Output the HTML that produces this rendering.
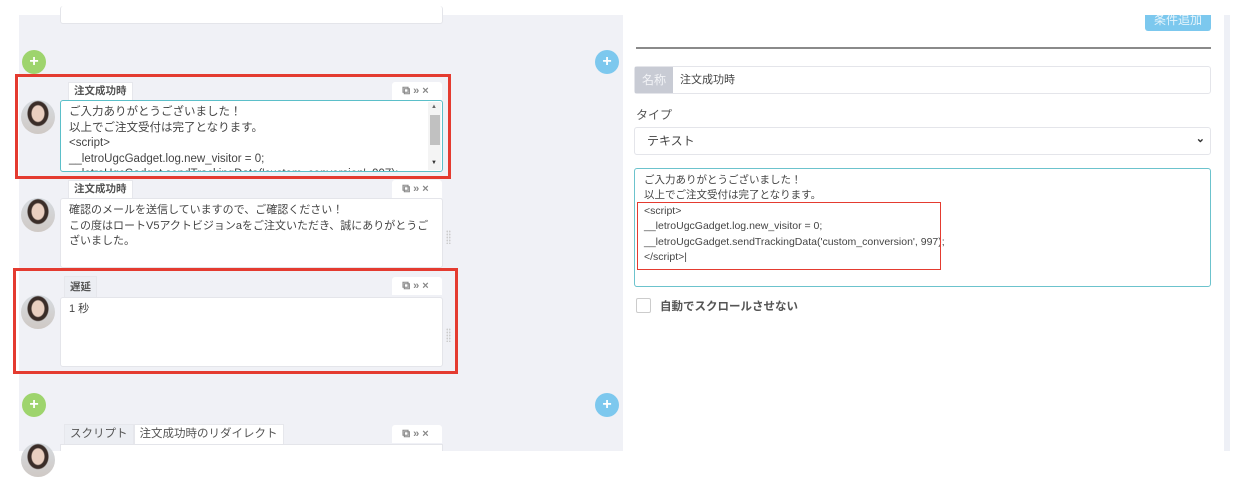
<!DOCTYPE html>
<html><head><meta charset="utf-8"><style>
*{box-sizing:border-box;margin:0;padding:0}
body{width:1234px;height:470px;background:#fff;position:relative;overflow:hidden;font-family:"Liberation Sans","Noto Sans CJK JP",sans-serif;color:#555;font-size:11px}
.a{position:absolute}
.lp{left:19px;top:15px;width:604px;height:436px;background:#f0f1f6}
.rs{left:1224px;top:15px;width:6px;height:436px;background:#eef0f6}
.plus{width:24px;height:24px;border-radius:50%;color:#fff;font-weight:bold;font-size:16px;line-height:24px;text-align:center}
.g{background:#9ed46d}.b{background:#7dc8ee}
.tab{background:#fff;border:1px solid #e6e7ec;border-bottom:none;height:18px;line-height:17px;padding:0 5px;font-size:10.5px;color:#555;font-weight:bold;white-space:nowrap}
.tabg{background:#eceef3}
.ic{background:#fff;height:18px;width:50px;border-radius:3px 3px 0 0;font-size:11px;color:#888;line-height:18px;text-align:center;letter-spacing:3px;font-weight:bold}
.box{background:#fff;border:1px solid #e4e5ea;border-radius:3px;padding:4px 8px;line-height:15.5px;font-size:11px;color:#444;white-space:nowrap}
.av{width:34px;height:34px;border-radius:50%;background:radial-gradient(ellipse 7px 9px at 50% 40%,#e9cfc0 0 6px,transparent 7px),radial-gradient(ellipse 11px 13px at 50% 40%,#3a2d28 0 10px,transparent 11px),linear-gradient(#d6dbe0,#cfc9c5);overflow:hidden}
.red{border:3px solid #e43b30}
.drag{width:5px;height:14px;background:radial-gradient(circle,#ccc 0.8px,transparent 1px) 0 0/2.5px 3px}
</style></head><body>
<div class="a lp"></div><div class="a rs"></div>
<div class="a box" style="left:60px;top:6px;width:383px;height:18px;border-top:none"></div>
<div class="a plus g" style="left:22px;top:50px">+</div>
<div class="a plus b" style="left:595px;top:50px">+</div>
<div class="a plus g" style="left:22px;top:393px">+</div>
<div class="a plus b" style="left:595px;top:393px">+</div>

<!-- card1 -->
<div class="a tab" style="left:68px;top:82px">注文成功時</div>
<div class="a ic" style="left:392px;top:82px">⧉»×</div>
<div class="a av" style="left:21px;top:100px"></div>
<div class="a box" style="left:60px;top:100px;width:383px;height:72px;border:1px solid #5bbfc9;overflow:hidden;padding-right:20px;font-size:11.5px">ご入力ありがとうございました！<br>以上でご注文受付は完了となります。<br>&lt;script&gt;<br>__letroUgcGadget.log.new_visitor = 0;<br>__letroUgcGadget.sendTrackingData('custom_conversion', 997);</div>
<div class="a" style="left:428px;top:102px;width:13px;height:68px;background:#f4f4f4"></div>
<div class="a" style="left:430px;top:115px;width:10px;height:30px;background:#c1c1c1"></div>
<div class="a" style="left:431px;top:104px;font-size:6px;color:#666">▲</div>
<div class="a" style="left:431px;top:160px;font-size:6px;color:#333">▼</div>
<div class="a red" style="left:15px;top:74px;width:436px;height:105px"></div>

<!-- card2 -->
<div class="a tab" style="left:68px;top:180px">注文成功時</div>
<div class="a ic" style="left:392px;top:180px">⧉»×</div>
<div class="a av" style="left:21px;top:198px"></div>
<div class="a box" style="left:60px;top:198px;width:383px;height:70px;overflow:hidden">確認のメールを送信していますので、ご確認ください！<br>この度はロートV5アクトビジョンaをご注文いただき、誠にありがとうご<br>ざいました。</div>
<div class="a drag" style="left:446px;top:230px"></div>

<!-- card3 -->
<div class="a tab tabg" style="left:64px;top:276px;height:21px;line-height:20px">遅延</div>
<div class="a ic" style="left:392px;top:277px">⧉»×</div>
<div class="a av" style="left:21px;top:295px"></div>
<div class="a box" style="left:60px;top:297px;width:383px;height:70px">1 秒</div>
<div class="a drag" style="left:446px;top:328px"></div>
<div class="a red" style="left:13px;top:268px;width:445px;height:106px"></div>

<!-- card4 -->
<div class="a" style="left:64px;top:424px;display:flex">
<div class="tab tabg" style="height:20px;font-weight:normal;font-size:11.5px;line-height:19px">スクリプト</div>
<div class="tab" style="height:20px;font-weight:normal;font-size:11.5px;line-height:19px">注文成功時のリダイレクト</div>
</div>
<div class="a ic" style="left:392px;top:425px">⧉»×</div>
<div class="a av" style="left:21px;top:443px"></div>
<div class="a" style="left:60px;top:444px;width:383px;height:7px;background:#fff;border:1px solid #e4e5ea;border-bottom:none"></div>

<!-- right -->
<div class="a" style="left:1145px;top:15px;width:66px;height:16px;background:#7cc8ee;border-radius:0 0 3px 3px;color:#e6f4fb;text-align:center;line-height:10px;font-size:12px;overflow:hidden">条件追加</div>
<div class="a" style="left:636px;top:47px;width:575px;height:2px;background:#8a8a8a"></div>
<div class="a" style="left:634px;top:66px;width:577px;height:28px;border:1px solid #e4e5ea;border-radius:3px"></div>
<div class="a" style="left:635px;top:67px;width:38px;height:26px;background:#c8cbd4;color:#f2f3f6;font-size:12px;line-height:26px;text-align:center">名称</div>
<div class="a" style="left:680px;top:67px;line-height:26px;font-size:11px;color:#444">注文成功時</div>
<div class="a" style="left:636px;top:106px;font-size:12px;color:#555">タイプ</div>
<div class="a" style="left:634px;top:127px;width:577px;height:28px;border:1px solid #e4e5ea;border-radius:3px;line-height:26px;padding-left:12px;font-size:12px;color:#444">テキスト<span style="position:absolute;right:5px;top:-2px;font-size:11px;color:#333;font-weight:bold">⌄</span></div>
<div class="a" style="left:634px;top:168px;width:577px;height:119px;border:1px solid #6cc3cd;border-radius:3px;padding:4px 7px 4px 9px;font-size:10.5px;line-height:15.4px;color:#444">ご入力ありがとうございました！<br>以上でご注文受付は完了となります。<br>&lt;script&gt;<br>__letroUgcGadget.log.new_visitor = 0;<br>__letroUgcGadget.sendTrackingData('custom_conversion', 997);<br>&lt;/script&gt;|</div>
<div class="a" style="left:637px;top:202px;width:304px;height:68px;border:1px solid #e43b30"></div>
<div class="a" style="left:636px;top:298px;width:15px;height:15px;border:1px solid #ccc;border-radius:2px"></div>
<div class="a" style="left:660px;top:298px;font-size:11.5px;color:#555;font-weight:bold">自動でスクロールさせない</div>
</body></html>
